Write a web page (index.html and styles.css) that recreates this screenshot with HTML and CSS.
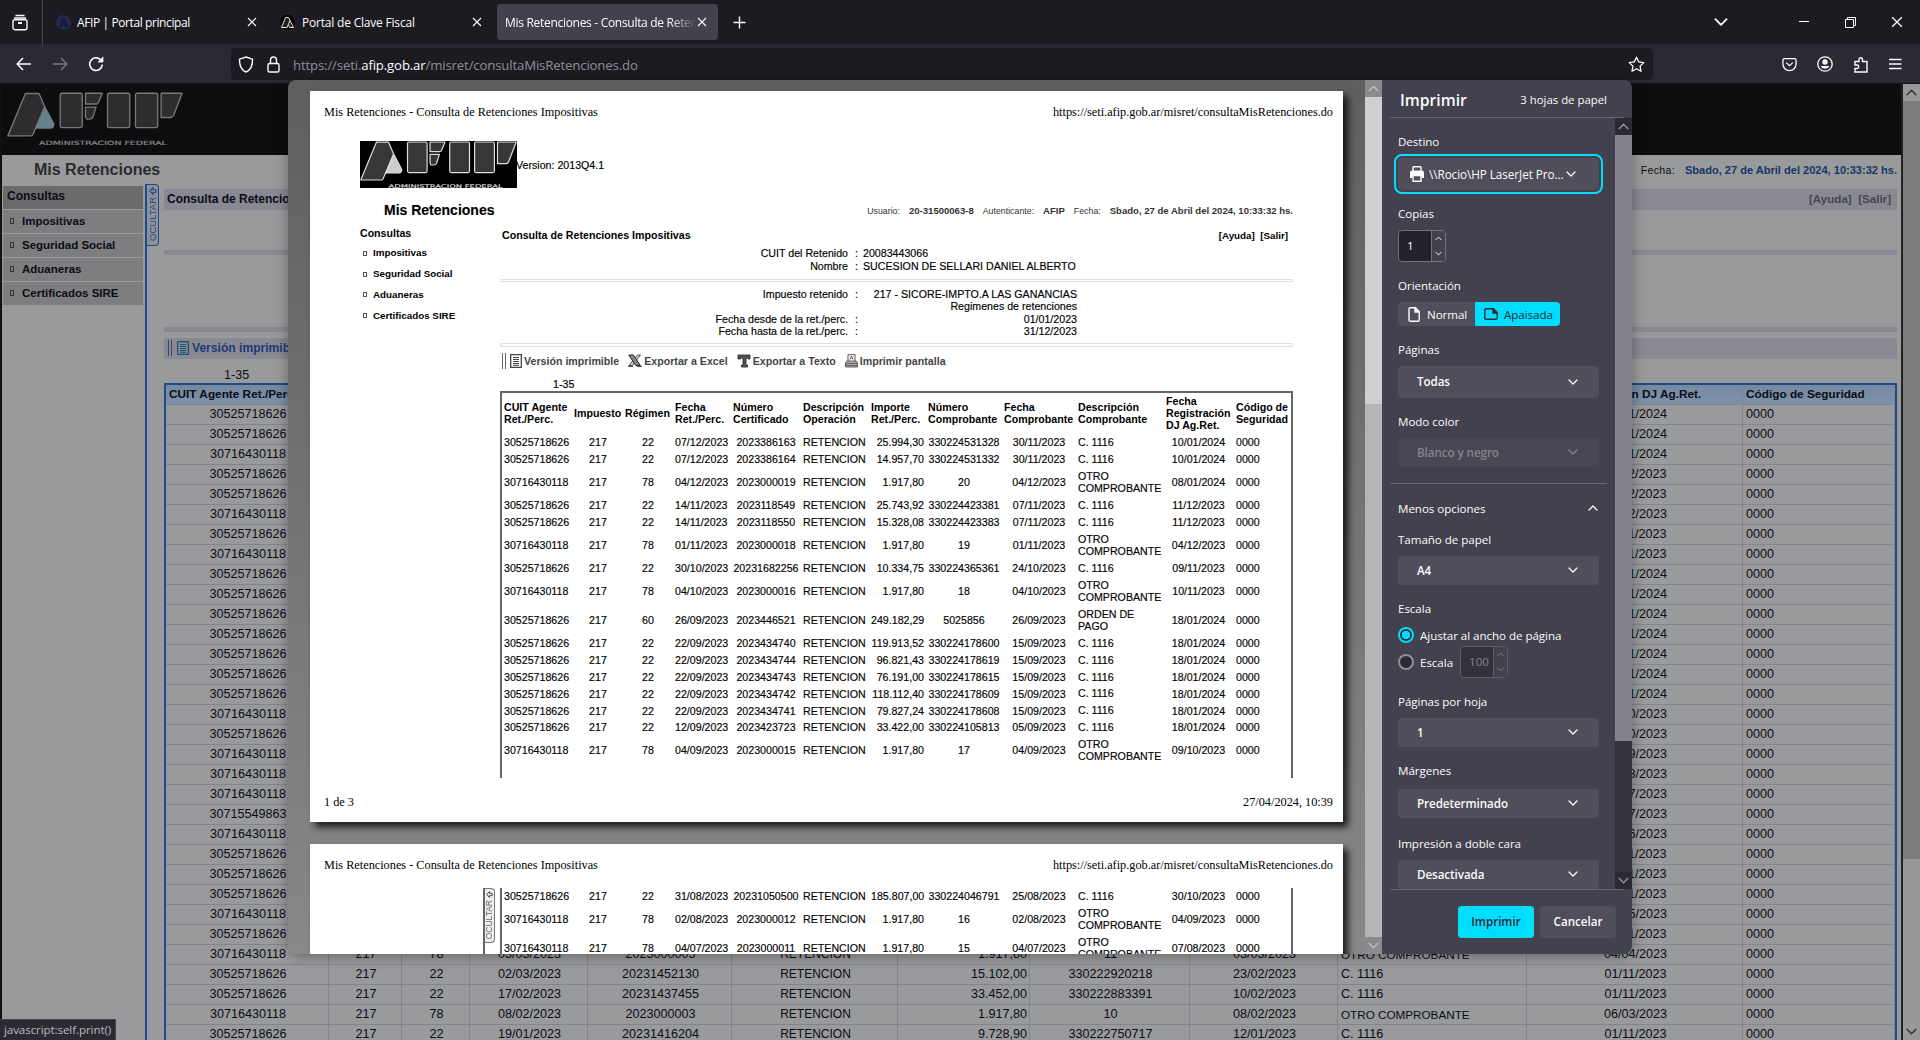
FILE: index.html
```html
<!DOCTYPE html>
<html lang="es">
<head>
<meta charset="utf-8">
<title>Mis Retenciones - Consulta de Retenciones Impositivas</title>
<link rel="stylesheet" href="styles.css">
</head>
<body>
<svg class="defs" width="0" height="0">
  <symbol id="afip" viewBox="0 0 157 47">
    <g class="logo-body" stroke-width="1.2" stroke-linejoin="round">
      <path class="logo-tri" d="M33.6 13L41.8 28.500Q41.500 32 39 32H25.700Z"/>
      <path d="M16.400 1.200H28.600L33.600 13L23 38Q22.500 39 21.500 39H.8Z"/>
      <rect x="47.500" y="1" width="19.600" height="30.600" rx="1.500"/>
      <path d="M70 1H85L81.500 9.500Q81 10.600 80 10.600H70ZM70 13.400H79.400L76.500 22.500Q75.500 24 73.500 24H71L70 22Z"/>
      <rect x="89.700" y="1" width="19.800" height="30.600" rx="1.500"/>
      <rect x="114.600" y="1" width="19.800" height="30.600" rx="1.500"/>
      <path d="M137.500 1H156.200L148.700 20.500Q148 22.600 146 22.600H137.500Z"/>
    </g>
    <text class="logo-text" x="28.600" y="46.800" textLength="114" lengthAdjust="spacingAndGlyphs">ADMINISTRACION FEDERAL</text>
  </symbol>
  <symbol id="down" viewBox="0 0 10 10"><path d="M1 3l4 4 4-4" fill="none" stroke="currentColor" stroke-width="1.300" stroke-linecap="round" stroke-linejoin="round"/></symbol>
  <symbol id="up" viewBox="0 0 10 10"><path d="M1 7l4-4 4 4" fill="none" stroke="currentColor" stroke-width="1.300" stroke-linecap="round" stroke-linejoin="round"/></symbol>
  <symbol id="close" viewBox="0 0 10 10"><path d="M1 1l8 8M9 1l-8 8" stroke="currentColor" stroke-width="1.100" fill="none"/></symbol>
  <symbol id="list" viewBox="0 0 12 14"><path d="M.7.700H11.300V13.300H.7Z" fill="none" stroke="currentColor" stroke-width="1.300"/><path d="M3 3.500h6M3 5.500h6M3 7.500h6M3 9.500h6M3 11.300h6" stroke="currentColor"/></symbol>
  <symbol id="arrow" viewBox="0 0 8 8"><path d="M4 .7L.8 4 4 7.300V5.300H7V2.700H4Z" fill="none" stroke="currentColor" stroke-width="1.100"/></symbol>
</svg>

<div class="tabbar">
  <div class="fxview"><svg width="16" height="17" viewBox="0 0 16 17" fill="none" stroke="#fbfbfe" stroke-width="1.400"><path d="M3.500 1.500h9M2 4h12"/><rect x="1" y="5.700" width="14" height="10" rx="2"/><path d="M6 9h4" stroke-width="2"/></svg></div>
  <div class="tab tab-a"><svg width="15" height="15" viewBox="0 0 15 15"><circle cx="7.500" cy="7.500" r="7.500" fill="#24284f"/><path d="M3.500 11.500L6.500 3.500h2l3 8h-2L7.500 6.500l-2 5z" fill="none" stroke="#10122a"/></svg><span class="ttl">AFIP | Portal principal</span><svg class="x" width="10" height="10"><use href="#close"/></svg></div>
  <div class="tab tab-b"><svg width="15" height="15" viewBox="0 0 15 15"><circle cx="7.500" cy="7.500" r="7.500" fill="#000"/><path d="M1.500 12.500L5.500 2.500h3l1.500 3-3 7zM10 5.500l3.500 7h-4L8.500 9.500" fill="#222" stroke="#ddd"/></svg><span class="ttl">Portal de Clave Fiscal</span><svg class="x" width="10" height="10"><use href="#close"/></svg></div>
  <div class="tab tab-c"><span class="ttl">Mis Retenciones - Consulta de Retenciones</span><svg class="x" width="10" height="10"><use href="#close"/></svg></div>
  <svg class="plus" width="13" height="13" viewBox="0 0 13 13"><path d="M6.500 .5v12M.5 6.500h12" stroke="#fbfbfe" stroke-width="1.400"/></svg>
  <div class="wincontrols">
    <svg width="14" height="14"><use href="#down"/></svg>
    <svg width="10" height="10" viewBox="0 0 10 10"><path d="M0 4.500h10" stroke="#fff"/></svg>
    <svg width="11" height="11" viewBox="0 0 11 11" fill="none" stroke="#fff"><path d="M.5 2.500h8v8h-8zM2.500 2.500v-2h8v8h-2"/></svg>
    <svg width="12" height="12"><use href="#close"/></svg>
  </div>
</div>

<div class="navbar">
  <svg width="16" height="14" viewBox="0 0 16 14" fill="none" stroke="#fbfbfe" stroke-width="1.500"><path d="M15 7H1.500M7 1L1.200 7 7 13"/></svg>
  <svg width="16" height="14" viewBox="0 0 16 14" fill="none" stroke="#76757e" stroke-width="1.500"><path d="M1 7h13.500M9 1l5.800 6L9 13"/></svg>
  <svg width="16" height="16" viewBox="0 0 16 16" fill="none" stroke="#fbfbfe" stroke-width="1.600"><path d="M13.500 5A6.300 6.300 0 1 0 14.300 8.500"/><path d="M15 .8V6H9.800" fill="#fbfbfe" stroke-width=".8"/></svg>
  <div class="urlbar">
    <svg width="16" height="17" viewBox="0 0 16 17" fill="none" stroke="#fbfbfe" stroke-width="1.400"><path d="M8 1L14.500 3.200C14.700 9 12.500 14 8 16 3.500 14 1.300 9 1.500 3.200Z"/></svg>
    <svg width="13" height="17" viewBox="0 0 13 17" fill="none" stroke="#fbfbfe" stroke-width="1.400"><rect x="1" y="7.500" width="11" height="8.500" rx="1.500"/><path d="M3.500 7.500V4a3 3 0 0 1 6 0v3.500"/></svg>
    <span class="url">https://seti.<b>afip.gob.ar</b>/misret/consultaMisRetenciones.do</span>
    <svg class="star" width="17" height="17" viewBox="0 0 17 17" fill="none" stroke="#fbfbfe" stroke-width="1.300" stroke-linejoin="round"><path d="M8.500 1.200l2.200 4.700 5.100.7-3.700 3.500.9 5.200-4.500-2.500L4 15.300l.9-5.200L1.200 6.600l5.100-.7z"/></svg>
  </div>
  <div class="navicons">
    <svg width="15" height="15" viewBox="0 0 16 16" fill="none" stroke="#fbfbfe" stroke-width="1.400"><path d="M1 3a1.500 1.500 0 0 1 1.500-1.300h11A1.500 1.500 0 0 1 15 3v4.500a7 7 0 0 1-14 0z"/><path d="M4.500 6L8 9.300 11.500 6"/></svg>
    <svg width="16" height="16" viewBox="0 0 16 16"><circle cx="8" cy="8" r="7.200" fill="none" stroke="#fbfbfe" stroke-width="1.300"/><circle cx="8" cy="6" r="2.700" fill="#fbfbfe"/><path d="M3.500 10h9a5 5 0 0 1-9 0z" fill="#fbfbfe"/></svg>
    <svg width="16" height="17" viewBox="0 0 16 17" fill="none" stroke="#fbfbfe" stroke-width="1.400"><path d="M2 5.500h4V3.500a1.700 1.700 0 0 1 3.500 0v2H14V16H2v-3.500h2a1.700 1.700 0 0 0 0-3.500H2z"/></svg>
    <svg width="13" height="12" viewBox="0 0 13 12"><path d="M0 1.500h12.500M0 6h12.500M0 10.500h12.500" stroke="#fbfbfe" stroke-width="1.300"/></svg>
  </div>
</div>

<main class="site">
  <div class="site-body">
    <header class="masthead"><svg class="logo-dim" width="176" height="53"><use href="#afip"/></svg></header>
    <div class="apphead"><h1>Mis Retenciones</h1><div class="session"><span class="val">AFIP</span><span class="key">Fecha:</span><span class="val">Sbado, 27 de Abril del 2024, 10:33:32 hs.</span></div></div>
    <div class="cols">
      <nav class="menu"><div class="mh">Consultas</div><div class="mi">Impositivas</div><div class="mi">Seguridad Social</div><div class="mi">Aduaneras</div><div class="mi">Certificados SIRE</div></nav>
      <div class="divider"><div class="hide-tab"><svg width="8" height="8"><use href="#arrow"/></svg><span>OCULTAR</span></div></div>
      <section class="work">
        <div class="band band-title"><b>Consulta de Retenciones Impositivas</b><b class="help">[Ayuda] &nbsp;[Salir]</b></div>
        <div class="band thin t1"></div>
        <div class="band thin t2"></div>
        <div class="band tools"><i class="grip"></i><svg width="12" height="14"><use href="#list"/></svg><b>Versión imprimible</b></div>
        <div class="range">1-35</div>
        <div class="grid" id="grid"><div class="gr gh"><span>CUIT Agente Ret./Perc.</span><span></span><span></span><span></span><span></span><span></span><span></span><span></span><span></span><span></span><span>Fecha Registración DJ Ag.Ret.</span><span>Código de Seguridad</span></div></div>
      </section>
    </div>
  </div>
  <div class="page-sb"><svg width="11" height="11"><use href="#up"/></svg><i></i><svg width="11" height="11"><use href="#down"/></svg></div>
</main>

<div class="status">javascript:self.print()</div>

<div class="dialog">
  <div class="preview">
    <article class="sheet sheet1">
      <div class="runner"><span>Mis Retenciones - Consulta de Retenciones Impositivas</span><span>https://seti.afip.gob.ar/misret/consultaMisRetenciones.do</span></div>
      <div class="p-logo"><svg class="logo-print" width="157" height="47"><use href="#afip"/></svg><span>Version: 2013Q4.1</span></div>
      <div class="p-head"><h2>Mis Retenciones</h2><div class="p-session"><span>Usuario:</span><b class="s1">20-31500063-8</b><span class="s2">Autenticante:</span><b class="s3">AFIP</b><span class="s4">Fecha:</span><b class="s5">Sbado, 27 de Abril del 2024, 10:33:32 hs.</b></div></div>
      <div class="p-cols">
        <nav class="p-menu"><div class="pmh">Consultas</div><div>Impositivas</div><div>Seguridad Social</div><div>Aduaneras</div><div>Certificados SIRE</div></nav>
        <section class="p-main">
          <div class="p-title"><b>Consulta de Retenciones Impositivas</b><b class="p-help">[Ayuda] &nbsp;[Salir]</b></div>
          <div class="kv kv1"><span>CUIT del Retenido</span><i>:</i><em>20083443066</em></div>
          <div class="kv kv2"><span>Nombre</span><i>:</i><em>SUCESION DE SELLARI DANIEL ALBERTO</em></div>
          <div class="rule"></div>
          <div class="kv r kv3"><span>Impuesto retenido</span><i>:</i><em>217 - SICORE-IMPTO.A LAS GANANCIAS</em></div>
          <div class="kv r kv4"><span></span><i></i><em>Regimenes de retenciones</em></div>
          <div class="kv r kv4"><span>Fecha desde de la ret./perc.</span><i>:</i><em>01/01/2023</em></div>
          <div class="kv r kv4"><span>Fecha hasta de la ret./perc.</span><i>:</i><em>31/12/2023</em></div>
          <div class="rule rule2"></div>
          <div class="p-tools"><i class="grip"></i><svg class="i1" width="12" height="14"><use href="#list"/></svg><b class="w1">Versión imprimible</b>
            <svg class="i2" width="14" height="13" viewBox="0 0 14 13"><path d="M12.500 1h-3L1 11.500h3.500z" fill="#ccc" stroke="#333" stroke-width=".8"/><path d="M.8 1h4.500l7 10.500h-4.500z" fill="#888" stroke="#222"/><path d="M9 12.300h5M0 12.300h5" stroke="#333"/></svg><b class="w2">Exportar a Excel</b>
            <svg class="i2" width="14" height="14" viewBox="0 0 14 14"><path d="M1 1h12v4h-2V4H9v7h1.500v2h-6v-2H6V4H3.500v1H1z" fill="#555" stroke="#222" stroke-width=".8"/></svg><b class="w3">Exportar a Texto</b>
            <svg class="i2" width="13" height="14" viewBox="0 0 13 14"><path d="M3 7V.7h7V7" fill="#fff" stroke="#555"/><path d="M5 5.500L6.500 2 8 5.500" fill="none" stroke="#333" stroke-width=".9"/><path d="M2 7h9l1.500 2v4H.5V9z" fill="#aaa" stroke="#444" stroke-width=".8"/><path d="M.5 9.500h12M.5 11.500h12" stroke="#555" stroke-width=".8"/></svg><b>Imprimir pantalla</b></div>
          <div class="p-range">1-35</div>
          <div class="p-grid p-grid1" id="pg1"><div class="pr ph"><span>CUIT Agente<br>Ret./Perc.</span><span>Impuesto</span><span>Régimen</span><span>Fecha<br>Ret./Perc.</span><span>Número<br>Certificado</span><span>Descripción<br>Operación</span><span>Importe<br>Ret./Perc.</span><span>Número<br>Comprobante</span><span>Fecha<br>Comprobante</span><span>Descripción<br>Comprobante</span><span>Fecha<br>Registración<br>DJ Ag.Ret.</span><span>Código de<br>Seguridad</span></div></div>
        </section>
      </div>
      <div class="runner foot"><span>1 de 3</span><span>27/04/2024, 10:39</span></div>
    </article>
    <article class="sheet sheet2">
      <div class="runner"><span>Mis Retenciones - Consulta de Retenciones Impositivas</span><span>https://seti.afip.gob.ar/misret/consultaMisRetenciones.do</span></div>
      <div class="p2"><div class="p2-div"><div class="p2-tab"><svg width="7" height="7"><use href="#arrow"/></svg><span>OCULTAR</span></div></div><div class="p-grid p-grid2" id="pg2"></div></div>
    </article>
  </div>
  <div class="prev-sb"><svg width="11" height="11"><use href="#up"/></svg><i></i><svg width="11" height="11"><use href="#down"/></svg></div>
  <aside class="panel">
    <div class="panel-head"><h3>Imprimir</h3><span>3 hojas de papel</span></div>
    <div class="panel-body">
      <form class="fields">
        <label class="l-dest">Destino</label>
        <div class="ring"><div class="select dest"><svg width="14" height="16" viewBox="0 0 14 16"><path d="M3 5V1.500Q3 .8 3.700.8h6.600q.7 0 .7.700V5" fill="none" stroke="#fbfbfe" stroke-width="1.400"/><path d="M2 4.500h10a2 2 0 0 1 2 2V12h-2.500v-2h-9v2H0V6.500a2 2 0 0 1 2-2z" fill="#fbfbfe"/><path d="M3 9.500h8v5.700H3z" fill="#4f4e5a" stroke="#fbfbfe" stroke-width="1.400"/></svg><span>\\Rocio\HP LaserJet Pro...</span><svg class="ch" width="10" height="10"><use href="#down"/></svg></div></div>
        <label class="l-cop">Copias</label>
        <div class="num n-cop"><span>1</span><div><svg width="7" height="7"><use href="#up"/></svg><svg width="7" height="7"><use href="#down"/></svg></div></div>
        <label class="l-ori">Orientación</label>
        <div class="seg"><div><svg width="12" height="15" viewBox="0 0 12 15" fill="none" stroke="currentColor" stroke-width="1.400"><path d="M2.200.8H7.500L11.200 4.500V13a1.200 1.200 0 0 1-1.200 1.200H2.200A1.200 1.200 0 0 1 1 13V2A1.200 1.200 0 0 1 2.200.8z"/><path d="M7 1v4h4" fill="currentColor"/></svg>Normal</div><div class="on"><svg width="14" height="12" viewBox="0 0 14 12" fill="none" stroke="currentColor" stroke-width="1.400"><path d="M2.200.8H9.500L13.200 4.500V10a1.200 1.200 0 0 1-1.200 1.200H2A1.200 1.200 0 0 1 .8 10V2A1.200 1.200 0 0 1 2.200.8z"/><path d="M9 1v4h4" fill="currentColor"/></svg>Apaisada</div></div>
        <label class="l-pag">Páginas</label>
        <div class="select tall"><span>Todas</span><svg class="ch" width="10" height="10"><use href="#down"/></svg></div>
        <label class="l-col">Modo color</label>
        <div class="select off"><span>Blanco y negro</span><svg class="ch" width="10" height="10"><use href="#down"/></svg></div>
        <div class="more"><span>Menos opciones</span><svg width="10" height="10"><use href="#up"/></svg></div>
        <label class="l-tam">Tamaño de papel</label>
        <div class="select"><span>A4</span><svg class="ch" width="10" height="10"><use href="#down"/></svg></div>
        <label class="l-esc">Escala</label>
        <div class="radio r1"><i class="dot on"></i><span>Ajustar al ancho de página</span></div>
        <div class="radio r2"><i class="dot"></i><span>Escala</span><div class="num dis"><span>100</span><div><svg width="7" height="7"><use href="#up"/></svg><svg width="7" height="7"><use href="#down"/></svg></div></div></div>
        <label class="l-pph">Páginas por hoja</label>
        <div class="select"><span>1</span><svg class="ch" width="10" height="10"><use href="#down"/></svg></div>
        <label class="l-mar">Márgenes</label>
        <div class="select"><span>Predeterminado</span><svg class="ch" width="10" height="10"><use href="#down"/></svg></div>
        <label class="l-imp">Impresión a doble cara</label>
        <div class="select"><span>Desactivada</span><svg class="ch" width="10" height="10"><use href="#down"/></svg></div>
      </form>
      <div class="panel-sb"><svg width="11" height="11"><use href="#up"/></svg><i></i><svg width="11" height="11"><use href="#down"/></svg></div>
    </div>
    <div class="panel-foot"><div class="btn primary">Imprimir</div><div class="btn">Cancelar</div></div>
  </aside>
</div>
<script src="rows.js"></script>
</body>
</html>
```
FILE: rows.js
```js
const A = '30525718626', B = '30716430118', R = 'RETENCION', C = 'C. 1116', O = 'OTRO COMPROBANTE', Z = '0000';
const rows = [
  [A,'217','22','07/12/2023','2023386163',R,'25.994,30','330224531328','30/11/2023',C,'10/01/2024',Z],
  [A,'217','22','07/12/2023','2023386164',R,'14.957,70','330224531332','30/11/2023',C,'10/01/2024',Z],
  [B,'217','78','04/12/2023','2023000019',R,'1.917,80','20','04/12/2023',O,'08/01/2024',Z],
  [A,'217','22','14/11/2023','2023118549',R,'25.743,92','330224423381','07/11/2023',C,'11/12/2023',Z],
  [A,'217','22','14/11/2023','2023118550',R,'15.328,08','330224423383','07/11/2023',C,'11/12/2023',Z],
  [B,'217','78','01/11/2023','2023000018',R,'1.917,80','19','01/11/2023',O,'04/12/2023',Z],
  [A,'217','22','30/10/2023','20231682256',R,'10.334,75','330224365361','24/10/2023',C,'09/11/2023',Z],
  [B,'217','78','04/10/2023','2023000016',R,'1.917,80','18','04/10/2023',O,'10/11/2023',Z],
  [A,'217','60','26/09/2023','2023446521',R,'249.182,29','5025856','26/09/2023','ORDEN DE PAGO','18/01/2024',Z],
  [A,'217','22','22/09/2023','2023434740',R,'119.913,52','330224178600','15/09/2023',C,'18/01/2024',Z],
  [A,'217','22','22/09/2023','2023434744',R,'96.821,43','330224178619','15/09/2023',C,'18/01/2024',Z],
  [A,'217','22','22/09/2023','2023434743',R,'76.191,00','330224178615','15/09/2023',C,'18/01/2024',Z],
  [A,'217','22','22/09/2023','2023434742',R,'118.112,40','330224178609','15/09/2023',C,'18/01/2024',Z],
  [A,'217','22','22/09/2023','2023434741',R,'79.827,24','330224178608','15/09/2023',C,'18/01/2024',Z],
  [A,'217','22','12/09/2023','2023423723',R,'33.422,00','330224105813','05/09/2023',C,'18/01/2024',Z],
  [B,'217','78','04/09/2023','2023000015',R,'1.917,80','17','04/09/2023',O,'09/10/2023',Z],
  [A,'217','22','31/08/2023','20231050500',R,'185.807,00','330224046791','25/08/2023',C,'30/10/2023',Z],
  [B,'217','78','02/08/2023','2023000012',R,'1.917,80','16','02/08/2023',O,'04/09/2023',Z],
  [B,'217','78','04/07/2023','2023000011',R,'1.917,80','15','04/07/2023',O,'07/08/2023',Z]
];
const e = '';
const short = (cuit, date) => [cuit,e,e,e,e,e,e,e,e,e,date,Z];
const covered = rows.map(r => short(r[0], r[10]));
const older = [
  short(B,'07/07/2023'), short('30715549863','07/07/2023'), short(B,'06/06/2023'),
  short(A,'01/11/2023'), short(A,'01/11/2023'), short(A,'01/11/2023'),
  short(B,'05/05/2023'), short(A,'01/11/2023'),
  [B,'217','78','03/03/2023','2023000005',R,'1.917,80','11','03/03/2023',O,'04/04/2023',Z],
  [A,'217','22','02/03/2023','20231452130',R,'15.102,00','330222920218','23/02/2023',C,'01/11/2023',Z],
  [A,'217','22','17/02/2023','20231437455',R,'33.452,00','330222883391','10/02/2023',C,'01/11/2023',Z],
  [B,'217','78','08/02/2023','2023000003',R,'1.917,80','10','08/02/2023',O,'06/03/2023',Z],
  [A,'217','22','19/01/2023','20231416204',R,'9.728,90','330222750717','12/01/2023',C,'01/11/2023',Z]
];
function fill(id, list, cls) {
  const host = document.getElementById(id);
  for (const row of list) {
    const line = document.createElement('div');
    line.className = cls + (row[9].startsWith('O') ? ' two' : '');
    for (const text of row) {
      const cell = document.createElement('span');
      cell.textContent = text;
      line.append(cell);
    }
    host.append(line);
  }
}
fill('grid', covered.concat(older), 'gr');
fill('pg1', rows.slice(0, 16), 'pr');
fill('pg2', rows.slice(16), 'pr');
```
FILE: styles.css
```css
*,*:before{box-sizing:border-box}
body{margin:0;width:1920px;height:1040px;overflow:hidden;position:relative;background:#999a9b;font-family:"Open Sans","Noto Sans",sans-serif;color:#fbfbfe;font-size:12px}
.defs{display:block;height:0}
svg{display:block;flex:none}
h1,h2,h3{margin:0}

/* browser chrome */
.tabbar{height:44px;background:#1c1b22;display:flex;align-items:center}
.fxview{width:43px;height:44px;border-right:1px solid #4a4a52;display:flex;align-items:center;padding-left:12px}
.tab{display:flex;align-items:center;height:36px;font-size:12px;letter-spacing:-.3px;white-space:nowrap}
.tab .ttl{margin-left:7px;flex:1;overflow:hidden}
.tab-a{width:225px;padding:0 11px 0 13px;letter-spacing:-.4px}
.tab-a .ttl{margin-left:6px}
.tab-b{width:225px;padding:0 11px 0 12px;letter-spacing:-.2px}
.tab-c{width:221px;margin-left:4px;padding:0 11px 0 1px;background:#42414d;border-radius:4px}
.tab-c .ttl{-webkit-mask-image:linear-gradient(90deg,#000 165px,transparent 192px)}
.plus{margin-left:15px}
.wincontrols{margin-left:auto;display:flex;align-items:center;padding-right:17px}
.wincontrols svg:nth-child(1){margin-right:71px}
.wincontrols svg:nth-child(2){margin-right:36px}
.wincontrols svg:nth-child(3){margin-right:35px}
.navbar{height:40px;background:#2b2a33;display:flex;align-items:center;padding:1px 0 0 16px;border-bottom:1px solid #15141a}
.navbar>svg{margin-right:20px}
.navbar>svg:nth-child(3){margin-right:0}
.urlbar{margin-left:127px;width:1422px;height:32px;background:#1c1b22;border-radius:4px;display:flex;align-items:center;padding:0 7px}
.urlbar svg{margin-right:13px}
.url{color:#8f8e96;font-size:13.200px;letter-spacing:-.15px;padding-top:1px}
.url b{font-weight:400;color:#fbfbfe}
.urlbar .star{margin:0 1px 0 auto}
.navicons{margin-left:auto;display:flex;align-items:center;gap:20px;padding-right:18px}

/* dimmed site */
.site{display:flex;height:956px;background:#999a9b;color:#0c0c14;font-family:"Liberation Sans",Arial,sans-serif;font-size:12.600px}
.site-body{width:1903px;border-left:2px solid #111;border-right:2px solid #222;overflow:hidden}
.masthead{height:71px;background:#0d0d0f;padding:8px 0 0 5px}
.logo-body{fill:var(--f);stroke:var(--s)}
.logo-tri{fill:var(--t)}
.logo-text{fill:var(--x);font:5.200px "DejaVu Sans",sans-serif;stroke:var(--x);stroke-width:.15px}
.logo-dim{--f:#2d2d2f;--s:#77787a;--t:#64828f;--x:#88898b}
.apphead{height:29px;display:flex;justify-content:space-between;padding:0 4px 0 32px;align-items:center}
.apphead h1{font-size:16px;color:#2b2b2e}
.session{display:flex;font-size:11.050px;align-items:center}
.session .key{font-size:10.500px;letter-spacing:.35px;margin:0 10px 0 9px}
.session .val{color:#163467;font-weight:bold}
.cols{display:flex;height:860px}
.menu{width:141px;padding:2px 0 0 1px;font-weight:bold}
.mh{background:#6b6b6c;height:23px;line-height:21px;padding-left:4px;font-size:12px}
.mi{background:#7e7e80;height:23px;margin-top:1px;font-size:11.500px;display:flex;align-items:center;padding:0 0 2px 7px}
.mi:before,.p-menu div:not(.pmh):before{content:"";width:4px;height:6px;border:1px solid #333;margin-right:8px}
.divider{width:18px;border-left:2px solid #1d4c8c;margin-left:2px}
.hide-tab{width:12px;height:62px;border:1px solid #1d4c8c;border-left:0;border-radius:0 4px 4px 0;color:#22409a;display:flex;flex-direction:column;align-items:center;padding-top:2px;background:#909197}
.hide-tab span{writing-mode:vertical-rl;transform:rotate(180deg);font-size:9.500px;line-height:11px;color:#1d4c8c;margin-top:2px}
.work{width:1733px;margin-left:1px;padding-top:5px}
.band{background:#898993;display:flex;align-items:center}
.band-title{height:21px;padding:0 6px 2px 3px;justify-content:space-between;font-size:12px}
.help{color:#47474c;font-size:11.600px}
.thin{height:5px}
.t1{margin-top:40px}
.t2{margin-top:72px}
.tools{height:21px;margin-top:6px;padding:0 0 1px 4px;color:#1e3a78;font-size:12.100px}
.tools svg{color:#1b5672;margin:0 3px 0 5px}
.grip{width:4px;height:16px;border:solid currentColor;border-width:0 1px;opacity:.8}
.range{height:24px;line-height:32px;padding-left:60px}
.grid{border:2px solid #1d4c8c;border-bottom:0;height:800px}
.gr{display:grid;grid-template-columns:163px 73px 68px 118px 144px 166px 132px 160px 148px 189px 216px 152px;height:20px;line-height:19px;white-space:nowrap}
.gr span{border-right:1px solid #84848f;border-bottom:1px solid #84848f;text-align:center;padding-left:2px}
.gr span:nth-child(7){text-align:right;padding-right:2px}
.gr span:nth-child(6){font-size:12px}
.gr span:nth-child(10),.gr span:nth-child(12){text-align:left;padding-left:3px}
.gr.two span:nth-child(10){font-size:11.700px}
.gh{background:linear-gradient(#76899e,#7c93ad);font-weight:bold;font-size:11.800px}
.gh span{text-align:left!important;padding-left:3px!important}
.page-sb,.prev-sb,.panel-sb{width:17px;flex:none;display:flex;flex-direction:column;align-items:center}
.page-sb svg,.prev-sb svg,.panel-sb svg{margin:3px 0}
.page-sb i,.prev-sb i,.panel-sb i{flex:1;width:17px}
.page-sb{background:#98989a;color:#333}
.page-sb i{background:linear-gradient(#7b7b7d 758px,#98989a 0)}

.status{position:absolute;left:0;bottom:0;width:116px;height:21px;background:#2b2a33;border:solid #45444e;border-width:1px 1px 0 0;color:#b9b9bd;font-size:11.600px;line-height:19px;padding-left:4px;letter-spacing:-.1px;white-space:nowrap}

/* print dialog */
.dialog{position:absolute;left:288px;top:80px;width:1344px;height:874px;display:flex;border-radius:8px;overflow:hidden;box-shadow:0 2px 14px rgba(0,0,0,.35)}
.preview{width:1077px;background:linear-gradient(#5f5f5f,#888);padding:11px 0 0 22px;overflow:hidden}
.sheet{width:1033px;background:#fff;color:#000;box-shadow:5px 5px 7px rgba(0,0,0,.8);font:10.650px/12px "Liberation Sans",Arial,sans-serif;-webkit-text-stroke:.15px currentColor;overflow:hidden}
.sheet1{height:731px}
.sheet2{height:400px;margin-top:22px}
.runner{display:flex;justify-content:space-between;font:12.270px/14px "Liberation Serif","Times New Roman",serif;-webkit-text-stroke:0;padding:14px 10px 0 14px;height:50px}
.foot{padding-top:17px;height:auto}
.p-logo{height:47px;display:flex;align-items:center;padding-left:50px}
.p-logo span{margin-left:-1px}
.logo-print{background:#000;-webkit-text-stroke:0;--f:#373737;--s:#ddd;--t:#ccc;--x:#ddd}
.p-head{height:40px;display:flex;justify-content:space-between;align-items:center;padding:4px 50px 0 74px}
.p-head h2{font-size:14px}
.p-session{display:flex;font-size:9.550px;color:#333;padding-top:2px;-webkit-text-stroke:0}
.p-session span{font-size:8.800px}
.p-session .s1,.p-session .s3,.p-session .s5{margin-left:9px}
.p-session .s2,.p-session .s4{margin-left:9px}
.p-cols{display:flex;height:550px}
.p-menu{width:140px;padding-left:50px;box-sizing:content-box;font-weight:bold;font-size:9.800px;-webkit-text-stroke:0}
.p-menu div{height:20.800px;display:flex;align-items:center;padding-left:3px}
.p-menu div:before{margin-right:6px!important;height:5px!important;border-color:#555!important}
.p-menu .pmh{font-size:10.600px;height:10px;margin-bottom:5px;padding-left:0}
.p-menu .pmh:before{display:none}
.p-main{width:793px}
.p-main b,.ph{-webkit-text-stroke:0}
.p-title{height:14px;line-height:14px;display:flex;justify-content:space-between;padding:0 5px 0 2px}
.p-help{font-size:9.800px;padding-top:1px}
.kv{display:flex;height:12.500px;line-height:12.500px;white-space:nowrap}
.kv span{width:348px;text-align:right}
.kv i,.kv em{font-style:normal}
.kv i{width:15px;padding-left:7px}
.kv em{width:214px}
.kv.r em{text-align:right}
.kv1{margin-top:5px;height:13px}
.rule{height:3px;border:1px solid #e2e2e2;margin-top:6px}
.kv3{margin-top:6px}
.rule2{height:4px;margin-top:5px}
.p-tools{display:flex;align-items:center;height:16px;margin-top:6px;color:#444;padding-left:2px;white-space:nowrap}
.p-tools svg{margin-right:2px}
.p-tools .i1{margin-left:4px}
.p-tools .i2{margin-left:9px}
.p-range{height:22px;line-height:30px;padding-left:53px}
.p-grid{border:2px solid #666;border-bottom:0}
.p-grid1{height:387px}
.pr{display:grid;grid-template-columns:70px 51px 50px 58px 70px 68px 57px 76px 74px 88px 70px 1fr;height:16.930px;align-items:center;padding-left:2px}
.pr.two{height:28.940px}
.pr span:nth-child(2),.pr span:nth-child(3){text-align:center}
.pr span:nth-child(2){margin-right:3px}
.pr span:nth-child(3){margin-right:4px}
.pr span:nth-child(7){text-align:right;padding-right:4px}
.pr span:nth-child(5),.pr span:nth-child(8),.pr span:nth-child(9){text-align:center;margin-right:4px;white-space:nowrap}
.pr span:nth-child(11){text-align:center;margin-right:5px}
.pr span:nth-child(10){line-height:12.300px;width:84px}
.pr.ph{height:41.500px;font-weight:bold;line-height:12.400px}
.ph span,.pr.ph span{text-align:left;margin:0;padding:0;white-space:nowrap}
.p2{display:flex;padding-left:173px;margin-top:-6px}
.p2-div{width:17px;height:200px;border-left:2px solid #666}
.p2-tab{width:10px;height:55px;border:1px solid #777;border-left:0;border-radius:0 4px 4px 0;display:flex;flex-direction:column;align-items:center;padding-top:2px;background:#eee;color:#444}
.p2-tab span{writing-mode:vertical-rl;transform:rotate(180deg);font-size:8.500px;line-height:9px;color:#666;margin-top:2px;-webkit-text-stroke:0}
.p-grid2{width:793px;border-top:0}
.prev-sb{background:#8b8b8c;color:#bbb}
.prev-sb i{background:linear-gradient(#cfcfd1 307px,#b5b5b6 0)}

/* print settings */
.panel{width:250px;background:#42414d;display:flex;flex-direction:column}
.panel-head{height:38px;margin:0 8px;border-bottom:1px solid #67666f;display:flex;justify-content:space-between;align-items:center;padding:2px 17px 0 10px;font-size:11.400px}
.panel-head h3{font-size:15.700px;font-weight:600}
.panel-body{display:flex;height:771px;overflow:hidden}
.fields{width:233px;padding:0 16px;display:flex;flex-direction:column;font-size:11.600px;letter-spacing:-.05px}
.fields>*{flex:none}
.fields label{height:16px;line-height:14px}
.l-dest{margin-top:17px}
.ring{margin:3px -4px 0;border:2px solid #0df;border-radius:8px;padding:2px}
.select{height:29px;background:#4f4e5a;border-radius:4px;display:flex;align-items:center;justify-content:space-between;padding:0 21px 1px 19px;font-weight:600;margin-top:7px}
.select.dest{height:32px;margin:0;padding-left:12px;padding-right:23px;justify-content:flex-start;font-size:11.700px;font-weight:400}
.dest span{margin-left:5px;white-space:nowrap}
.dest .ch{margin-left:auto}
.select.tall{height:32px}
.select.off{background:#484753;color:#85848d}
.l-cop{margin-top:13px}
.num{width:48px;height:32px;border:1px solid #74737c;border-radius:4px;display:flex;background:#23222b;overflow:hidden}
.num span{flex:1;line-height:30px;padding-left:8px}
.num>div{width:14px;border-left:1px solid #74737c;background:#42414d;display:flex;flex-direction:column;justify-content:space-around;align-items:center}
.n-cop{margin-top:7px}
.l-ori{margin-top:17px}
.seg{margin-top:7px;display:flex;height:24px}
.seg div{width:77px;background:#4f4e5a;border-radius:4px 0 0 4px;display:flex;align-items:center;gap:7px;padding-left:10px}
.seg .on{width:85px;background:#0df;color:#2b2a33;border-radius:0 4px 4px 0;padding-left:9px;gap:6px}
.l-pag{margin-top:17px}
.l-col{margin-top:17px}
.more{margin:16px -8px 0;border-top:1px solid #67666f;height:50px;padding:0 9px 1px 8px;display:flex;justify-content:space-between;align-items:center}
.l-tam{margin-top:0}
.l-esc{margin-top:17px}
.radio{display:flex;align-items:center;height:16px}
.radio>span{margin-left:6px}
.r1{margin-top:9px}
.r2{height:32px;margin-top:3px}
.dot{width:16px;height:16px;border-radius:50%;border:2px solid #8f8f9d;background:#2b2a33}
.dot.on{border-color:#0df;background:radial-gradient(#0df 4px,#2b2a33 4.500px)}
.num.dis{margin-left:7px;background:#33323c;border-color:#5b5a65;color:#85848d}
.dis>div{border-color:#5b5a65!important}
.l-pph,.l-mar,.l-imp{margin-top:17px}
.l-mar+.select{margin-top:9px}
.l-imp{margin-top:19px!important}
.panel-sb{background:#2b2a33;color:#8f8f95}
.panel-sb i{background:linear-gradient(#84838b 606px,#35343e 0)}
.panel-foot{flex:1;margin:0 8px;border-top:1px solid #67666f;display:flex;gap:6px;justify-content:flex-end;padding:16px 8px 0 0}
.btn{width:76px;height:32px;border-radius:4px;background:#4f4e5a;display:flex;align-items:center;justify-content:center;font-weight:600;font-size:11.600px;padding-bottom:1px}
.primary{background:#0df;color:#2b2a33}
```
